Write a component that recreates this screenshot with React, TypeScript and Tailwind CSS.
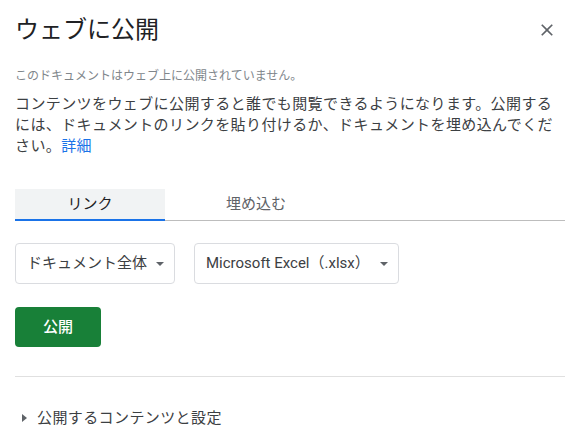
import { useState } from "react";

const font = "font-['Roboto','Noto_Sans_CJK_JP',sans-serif]";

const CaretDown = () => (
  <svg width="8" height="4" viewBox="0 0 8 4" className="shrink-0">
    <path d="M0 0h8L4 4z" fill="#5f6368" />
  </svg>
);

const Select = ({ label, width }: { label: string; width: string }) => (
  <button
    className={`flex h-[41px] ${width} items-center justify-between rounded-[4px] border border-[#dadce0] bg-white pl-[11px] pr-[10px] text-[15px] text-[#3c4043]`}
  >
    <span>{label}</span>
    <CaretDown />
  </button>
);

export default function App() {
  const [tab, setTab] = useState<"link" | "embed">("link");

  return (
    <div className={`h-[440px] w-[580px] bg-white px-[15px] ${font}`}>
      <header className="flex items-start justify-between pt-[14px]">
        <h1 className="text-[24px] leading-8 font-normal text-[#202124]">
          ウェブに公開
        </h1>
        <button className="mr-[8px] mt-[6px] text-[#5f6368]">
          <svg width="20" height="20" viewBox="0 0 24 24">
            <path
              fill="currentColor"
              d="M19 6.41L17.59 5 12 10.59 6.41 5 5 6.41 10.59 12 5 17.59 6.41 19 12 13.41 17.59 19 19 17.59 13.41 12z"
            />
          </svg>
        </button>
      </header>

      <p className="mt-[22px] text-[12px] leading-4 text-[#80868b]">
        このドキュメントはウェブ上に公開されていません。
      </p>

      <p className="mt-[10px] text-[15px] leading-[21px] tracking-[0.4px] text-[#3c4043]">
        コンテンツをウェブに公開すると誰でも閲覧できるようになります。公開するには、ドキュメントのリンクを貼り付けるか、ドキュメントを埋め込んでください。
        <a className="text-[#1a73e8]">詳細</a>
      </p>

      <div className="mt-[32px] flex border-b border-[#bdbdbd]">
        <button
          onClick={() => setTab("link")}
          className={`-mb-px h-[32px] w-[150px] border-b-2 text-[15px] ${
            tab === "link"
              ? "border-[#1a73e8] bg-[#f1f3f4] text-[#202124]"
              : "border-transparent text-[#5f6368]"
          }`}
        >
          リンク
        </button>
        <button
          onClick={() => setTab("embed")}
          className={`-mb-px h-[32px] w-[182px] border-b-2 text-[15px] ${
            tab === "embed"
              ? "border-[#1a73e8] bg-[#f1f3f4] text-[#202124]"
              : "border-transparent text-[#5f6368]"
          }`}
        >
          埋め込む
        </button>
      </div>

      <div className="mt-[22px] flex gap-[19px]">
        <Select label="ドキュメント全体" width="w-[160px]" />
        <Select label="Microsoft Excel（.xlsx）" width="w-[205px]" />
      </div>

      <button className="mt-[23px] h-[40px] w-[86px] rounded-[4px] bg-[#188038] text-[15px] font-medium text-white">
        公開
      </button>

      <div className="mt-[29px] h-px bg-[#e0e0e0]" />

      <button className="mt-[31px] flex items-center gap-[10px] pl-[7px] text-[15px] leading-5 tracking-[0.4px] text-[#3c4043]">
        <svg width="5" height="8" viewBox="0 0 5 8">
          <path d="M0 0l5 4-5 4z" fill="#5f6368" />
        </svg>
        <span>公開するコンテンツと設定</span>
      </button>
    </div>
  );
}
